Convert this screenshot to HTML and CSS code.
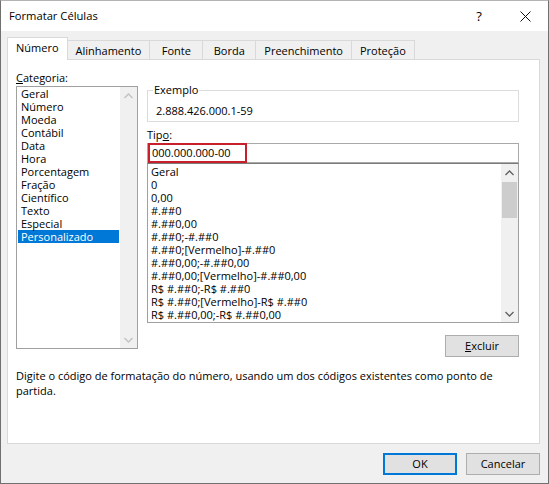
FILE: index.html
```html
<!DOCTYPE html>
<html lang="pt-BR">
<head>
<meta charset="utf-8">
<title>Formatar Células</title>
<link rel="stylesheet" href="styles.css">
</head>
<body>
<div class="window">
  <div class="titlebar">
    <span class="title">Formatar Células</span>
    <div class="tb-buttons">
      <span class="tb-btn help">?</span>
      <span class="tb-btn close"><svg width="11" height="11" viewBox="0 0 11 11"><path d="M0.5 0.5 L10.5 10.5 M10.5 0.5 L0.5 10.5" stroke="#111" stroke-width="1" fill="none"/></svg></span>
    </div>
  </div>
  <div class="client">
    <div class="tabs">
      <div class="tab active">Número</div>
      <div class="tab">Alinhamento</div>
      <div class="tab">Fonte</div>
      <div class="tab">Borda</div>
      <div class="tab">Preenchimento</div>
      <div class="tab">Proteção</div>
    </div>
    <div class="panel">
      <div class="columns">
        <div class="left">
          <div class="label"><u>C</u>ategoria:</div>
          <div class="listbox cat">
            <ul class="items">
              <li>Geral</li>
              <li>Número</li>
              <li>Moeda</li>
              <li>Contábil</li>
              <li>Data</li>
              <li>Hora</li>
              <li>Porcentagem</li>
              <li>Fração</li>
              <li>Científico</li>
              <li>Texto</li>
              <li>Especial</li>
              <li class="selected">Personalizado</li>
            </ul>
            <div class="scrollbar disabled">
              <span class="arrow"><svg width="9" height="6" viewBox="0 0 9 6"><path d="M0.5 5 L4.5 1 L8.5 5" stroke="currentColor" stroke-width="1.3" fill="none"/></svg></span>
              <span class="track"></span>
              <span class="arrow"><svg width="9" height="6" viewBox="0 0 9 6"><path d="M0.5 1 L4.5 5 L8.5 1" stroke="currentColor" stroke-width="1.3" fill="none"/></svg></span>
            </div>
          </div>
        </div>
        <div class="right">
          <fieldset class="group">
            <legend>Exemplo</legend>
            <div class="sample">2.888.426.000.1-59</div>
          </fieldset>
          <div class="label tipo">Tip<u>o</u>:</div>
          <div class="input">000.000.000-00<span class="highlight"></span></div>
          <div class="listbox fmt">
            <ul class="items">
              <li>Geral</li>
              <li>0</li>
              <li>0,00</li>
              <li>#.##0</li>
              <li>#.##0,00</li>
              <li>#.##0;-#.##0</li>
              <li>#.##0;[Vermelho]-#.##0</li>
              <li>#.##0,00;-#.##0,00</li>
              <li>#.##0,00;[Vermelho]-#.##0,00</li>
              <li>R$ #.##0;-R$ #.##0</li>
              <li>R$ #.##0;[Vermelho]-R$ #.##0</li>
              <li>R$ #.##0,00;-R$ #.##0,00</li>
            </ul>
            <div class="scrollbar">
              <span class="arrow"><svg width="9" height="6" viewBox="0 0 9 6"><path d="M0.5 5 L4.5 1 L8.5 5" stroke="currentColor" stroke-width="1.3" fill="none"/></svg></span>
              <span class="track"><span class="thumb"></span></span>
              <span class="arrow"><svg width="9" height="6" viewBox="0 0 9 6"><path d="M0.5 1 L4.5 5 L8.5 1" stroke="currentColor" stroke-width="1.3" fill="none"/></svg></span>
            </div>
          </div>
          <div class="row-right"><button class="btn excluir"><u>E</u>xcluir</button></div>
        </div>
      </div>
      <p class="desc">Digite o código de formatação do número, usando um dos códigos existentes como ponto de partida.</p>
    </div>
    <div class="footer">
      <button class="btn default">OK</button>
      <button class="btn">Cancelar</button>
    </div>
  </div>
</div>
</body>
</html>
```
FILE: styles.css
```css
html, body {
  margin: 0;
  padding: 0;
  background: #ffffff;
}

body {
  font-family: "Open Sans", "Noto Sans", sans-serif;
  font-size: 11px;
  color: #000;
}

.window {
  width: 549px;
  height: 484px;
  box-sizing: border-box;
  border: 1px solid #707070;
  border-top-color: #b4b4b4;
  background: #f0f0f0;
  display: flex;
  flex-direction: column;
  overflow: hidden;
}

/* Title bar */
.titlebar {
  height: 30px;
  flex: 0 0 30px;
  background: #ffffff;
  display: flex;
  align-items: center;
  justify-content: space-between;
}

.title {
  padding-left: 8px;
  font-size: 11.2px;
  padding-bottom: 1px;
}

.tb-buttons {
  display: flex;
  height: 100%;
}

.tb-btn {
  width: 46px;
  height: 100%;
  display: flex;
  align-items: center;
  justify-content: center;
}

.help {
  font-size: 13px;
  padding-bottom: 1px;
  box-sizing: border-box;
}

/* Client area */
.client {
  flex: 1;
  display: flex;
  flex-direction: column;
}

.tabs {
  display: flex;
  align-items: flex-end;
  height: 22px;
  margin: 6px 0 0 6px;
  position: relative;
  z-index: 1;
}

.tab {
  height: 19px;
  box-sizing: border-box;
  min-width: 54px;
  padding: 1px 8px 0;
  border: 1px solid #d9d9d9;
  border-bottom: none;
  margin-left: -1px;
  background: #f0f0f0;
  line-height: 17px;
  text-align: center;
}

.tab:first-child {
  margin-left: 0;
}

.tab.active {
  height: 23px;
  margin-bottom: -1px;
  background: #ffffff;
  padding: 0 8px 3px;
  line-height: 19px;
  position: relative;
  z-index: 2;
}

.panel {
  margin: 0 8px 0 6px;
  height: 385px;
  box-sizing: border-box;
  border: 1px solid #d9d9d9;
  background: #ffffff;
  padding: 10px 8px 0 8px;
}

.columns {
  display: flex;
  gap: 9px;
}

.label {
  line-height: 16px;
}

.label u {
  text-decoration-thickness: 1px;
  text-underline-offset: 1px;
}

/* List boxes */
.listbox {
  border: 1px solid #a0a0a0;
  box-sizing: border-box;
  display: flex;
  background: #ffffff;
}

.listbox.cat {
  width: 122px;
  height: 263px;
}

.items {
  list-style: none;
  margin: 0;
  padding: 0;
  flex: 1;
  overflow: hidden;
}

.items li {
  line-height: 13px;
  height: 13px;
  white-space: nowrap;
}

.cat .items li {
  padding-left: 3px;
  margin: 0 1px;
}

.cat .items li.selected {
  background: #0078d7;
  color: #ffffff;
}

.scrollbar {
  width: 17px;
  flex: 0 0 17px;
  background: #f0f0f0;
  display: flex;
  flex-direction: column;
  color: #606060;
}

.scrollbar.disabled {
  color: #c2c2c2;
}

.arrow {
  height: 17px;
  flex: 0 0 17px;
  display: flex;
  align-items: center;
  justify-content: center;
}

.track {
  flex: 1;
  display: flex;
  flex-direction: column;
}

.thumb {
  height: 36px;
  margin: 1px 1px 0;
  background: #cdcdcd;
}

/* Right column */
.right {
  width: 372px;
  margin-top: 13px;
  display: flex;
  flex-direction: column;
}

.group {
  margin: 0;
  border: 1px solid #dcdcdc;
  padding: 6px 8px 3px 8px;
  min-inline-size: 0;
}

.group legend {
  line-height: 14px;
  padding: 0 1px;
  margin-left: -3px;
}

.sample {
  line-height: 15px;
}

.tipo {
  margin-top: 5px;
}

.input {
  position: relative;
  height: 20px;
  box-sizing: border-box;
  border: 1px solid #a9a9a9;
  padding-left: 4px;
  line-height: 18px;
}

.highlight {
  position: absolute;
  left: 0;
  top: -1px;
  width: 99px;
  height: 20px;
  box-sizing: border-box;
  border: 2px solid #c8202a;
}

.listbox.fmt {
  height: 160px;
  border-top-color: #7a7a7a;
}

.fmt .items {
  padding-top: 1px;
}

.fmt .items li {
  padding-left: 3px;
}

.row-right {
  display: flex;
  justify-content: flex-end;
  margin-top: 12px;
}

/* Buttons */
.btn {
  font-family: inherit;
  font-size: 11px;
  color: #000;
  width: 74px;
  height: 22px;
  padding: 0;
  box-sizing: border-box;
  border: 1px solid #adadad;
  background: #e1e1e1;
  line-height: 18px;
}

.btn.default {
  border: 2px solid #0078d7;
}

.btn u {
  text-underline-offset: 1px;
}

.desc {
  margin: 11px 0 0 0;
  width: 515px;
  line-height: 15px;
}

.footer {
  display: flex;
  justify-content: flex-end;
  gap: 9px;
  margin: 9px 8px 0 0;
}
```
